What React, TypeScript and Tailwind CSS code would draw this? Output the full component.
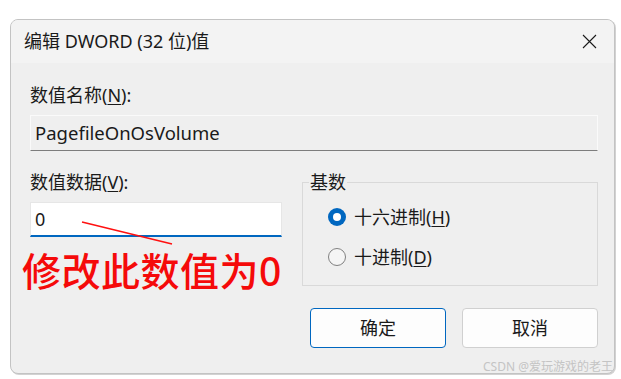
const font = { fontFamily: '"Noto Sans", "Noto Sans CJK SC", sans-serif' };

const Radio = ({ checked, label, hot }: { checked?: boolean; label: string; hot: string }) => {
  const [before, after] = label.split("|");
  return (
    <div className="flex items-center h-[24px] gap-[8px]">
      {checked ? (
        <span className="w-[18px] h-[18px] rounded-full bg-[#0067c0] flex items-center justify-center">
          <span className="w-[8px] h-[8px] rounded-full bg-white" />
        </span>
      ) : (
        <span className="w-[18px] h-[18px] rounded-full border border-[#808080] bg-[#f5f5f5]" />
      )}
      <span className="text-[18px] leading-[24px] text-[#1a1a1a]">
        {before}
        <span className="underline underline-offset-2">{hot}</span>
        {after}
      </span>
    </div>
  );
};

const App = () => {
  return (
    <div className="relative w-[621px] h-[379px] bg-white overflow-hidden" style={font}>
      <div className="ml-[10px] mt-[19px] w-[605px] h-[355px] border border-[#c3c3c3] rounded-[8px] bg-[#efefef] overflow-hidden shadow-[1px_1px_0_#d2d2d2] flex flex-col">
        {/* title bar */}
        <div className="h-[43px] bg-[#f3f3f3] flex items-center justify-between pl-[13px] pr-[17px]">
          <span className="text-[18px] text-[#1a1a1a]">编辑 DWORD (32 位)值</span>
          <svg width="15" height="15" viewBox="0 0 15 15">
            <path d="M1 1 L14 14 M14 1 L1 14" stroke="#1a1a1a" strokeWidth="1.1" />
          </svg>
        </div>

        <div className="flex flex-col pl-[19px] pr-[16px] pt-[20px]">
          <div className="text-[18px] leading-[24px] text-[#1a1a1a]">
            数值名称(<span className="underline underline-offset-2">N</span>):
          </div>
          <div className="mt-[8px] h-[36px] border border-[#fafafa] border-b-[#7d7d7d] flex items-center px-[4px] text-[18.5px] text-[#1a1a1a]">
            PagefileOnOsVolume
          </div>

          <div className="mt-[19px] flex gap-[20px]">
            <div className="relative w-[252px]">
              <div className="text-[18px] leading-[24px] text-[#1a1a1a]">
                数值数据(<span className="underline underline-offset-2">V</span>):
              </div>
              <div className="mt-[8px] h-[35px] bg-white border border-[#e6e6e6] border-b-2 border-b-[#0067c0] flex items-center px-[4px] text-[18px] text-[#1a1a1a]">
                0
              </div>
              {/* annotation */}
              <svg className="absolute left-0 top-0 overflow-visible" width="160" height="80">
                <line x1="52" y1="52" x2="142" y2="74" stroke="#ff1010" strokeWidth="1.6" />
              </svg>
              <div className="absolute left-[-8px] top-[80px] whitespace-nowrap text-[39px] leading-[42px] font-medium text-[#f50a0a] tracking-[0.5px]">
                修改此数值为0
              </div>
            </div>

            <div className="flex-1 mt-[12px] h-[104px] relative border border-[#d9d9d9] pl-[25px] pt-[22px] flex flex-col gap-[16px]">
              <span className="absolute left-[6px] top-[-13px] px-[1px] bg-[#efefef] text-[18px] leading-[24px] text-[#1a1a1a]">
                基数
              </span>
              <Radio checked label="十六进制(|)" hot="H" />
              <Radio label="十进制(|)" hot="D" />
            </div>
          </div>

          <div className="mt-[22px] flex justify-end gap-[16px]">
            <button className="w-[136px] h-[40px] rounded-[4px] bg-[#fdfdfd] border border-[#0067c0] text-[18px] text-[#1a1a1a]">
              确定
            </button>
            <button className="w-[136px] h-[40px] rounded-[4px] bg-[#fdfdfd] border border-[#d0d0d0] text-[18px] text-[#1a1a1a]">
              取消
            </button>
          </div>
        </div>
      </div>

      <div className="absolute right-[8px] top-[359px] text-[12px] leading-[16px] text-[#c4c4c4] whitespace-nowrap">
        CSDN @爱玩游戏的老王
      </div>
    </div>
  );
};

export default App;
